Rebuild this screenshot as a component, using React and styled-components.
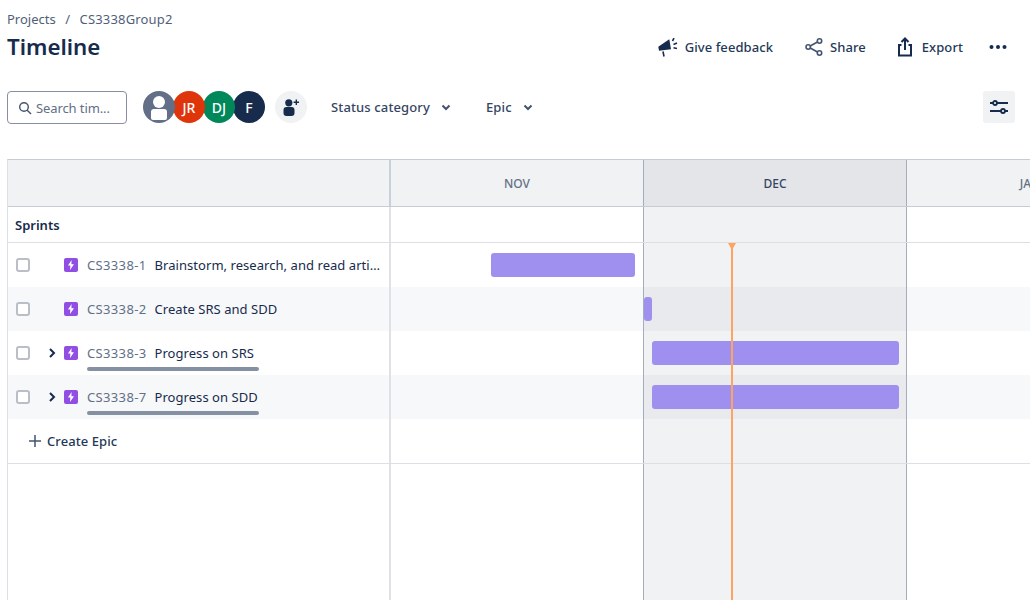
import React from "react";
import styled, { createGlobalStyle } from "styled-components";

const Global = createGlobalStyle`
  html, body { margin: 0; padding: 0; background: #fff; }
  body { font-family: "Noto Sans", "Open Sans", sans-serif; color: #172b4d; overflow: hidden; }
  * { box-sizing: border-box; }
`;

const Page = styled.div`
  width: 1030px; height: 600px; overflow: hidden; display: flex; flex-direction: column;
`;
const Header = styled.header`
  display: flex; justify-content: space-between; padding: 10px 23px 0 7px; height: 91px;
`;
const Crumbs = styled.nav`
  display: flex; gap: 9.5px; font-size: 13px; line-height: 18px; color: #505f79;
`;
const Project = styled.span`
  letter-spacing: 0.17px;
`;
const Title = styled.h1`
  margin: 4px 0 0; font-size: 22.3px; line-height: 30px; font-weight: 600; color: #172b4d;
`;
const Actions = styled.div`
  display: flex; align-items: center; height: 32px; margin-top: 21px;
`;
const ActionButton = styled.div`
  display: flex; align-items: center; gap: ${p => p.$gap}px; font-size: 13px; font-weight: 500; color: #253858; margin-left: ${p => p.$ml || 0}px;
  white-space: nowrap; letter-spacing: 0.07px;
`;
const MoreDots = styled.svg`
  margin-left: 26px;
`;
const Toolbar = styled.div`
  display: flex; align-items: flex-start; height: 33px; padding: 0 15px 0 7px;
`;
const Search = styled.div`
  width: 120px; height: 33px; border: 1px solid #8590a2; border-radius: 4px; display: flex; align-items: center; gap: 4px; padding-left: 10px;
  font-size: 13px; color: #626f86; white-space: nowrap; letter-spacing: -0.1px;
`;
const Avatars = styled.div`
  display: flex; margin-left: 16px; align-items: center;
`;
const Avatar = styled.div`
  position: relative; z-index: ${p => p.$z};
  width: 32px; height: 32px; border-radius: 50%; background: ${p => p.$bg}; color: #fff; font-size: 14px; font-weight: 500;
  display: flex; align-items: center; justify-content: center; margin-left: ${p => p.$first ? 0 : -2}px; overflow: hidden;
`;
const AddPeople = styled.div`
  width: 32px; height: 32px; border-radius: 50%; background: #f1f2f4; margin-left: 10px; display: flex; align-items: center; justify-content: center;
`;
const Filter = styled.div`
  display: flex; align-items: center; height: 32px; gap: 10px; font-size: 13px; font-weight: 500; color: #344563; margin-left: ${p => p.$ml}px; letter-spacing: 0.13px;
`;
const SettingsButton = styled.div`
  width: 32px; height: 32px; margin-left: auto; background: #f1f2f4; border-radius: 3px; display: flex; align-items: center; justify-content: center;
`;
const Timeline = styled.section`
  position: relative; margin: 35px 0 0 7px; flex: 1; display: flex; flex-direction: column;
  border-left: 1px solid #dcdfe4; border-top: 1px solid #c7cbd4; min-height: 0; overflow: hidden;
`;
const Row = styled.div`
  display: grid; grid-template-columns: 381px 2px 252px 1px 262px 1px 246px; flex: ${p => p.$fill ? 1 : "none"};
  height: ${p => p.$h ? p.$h + "px" : "auto"};
  background: ${p => p.$bg || "#fff"};
  border-bottom: ${p => p.$line ? `1px solid ${p.$line}` : "none"};
`;
const Left = styled.div`
  display: flex; align-items: center; min-width: 0; font-size: 13px; padding-left: ${p => p.$pl || 0}px;
  font-weight: ${p => p.$bold ? 600 : 400}; color: #172b4d;
`;
const VLine = styled.div`
  background: ${p => p.$c || "#a5adba"};
`;
const Month = styled.div`
  position: relative; display: flex; align-items: center; justify-content: center;
  font-size: 12px; font-weight: 500; color: ${p => p.$c || "#626f86"}; background: ${p => p.$bg || "transparent"}; white-space: nowrap;
`;
const Check = styled.span`
  width: 14px; height: 14px; border: 2px solid #b9bec7; border-radius: 3px; flex: none; background: #fff; margin-left: 8px;
`;
const Expand = styled.span`
  width: 16px; margin-left: 14px; flex: none; display: flex; justify-content: center;
`;
const EpicIcon = styled.span`
  width: 14px; height: 14px; border-radius: 2px; background: #904ee2; flex: none; margin-left: 4px; margin-right: 9px; display: flex; align-items: center; justify-content: center;
`;
const IssueWrap = styled.span`
  position: relative; display: flex; gap: 8px; white-space: nowrap; min-width: 0;
`;
const IssueId = styled.span`
  color: #626f86; letter-spacing: 0.35px;
`;
const Summary = styled.span`
  color: #172b4d; overflow: hidden; text-overflow: ellipsis; max-width: 226px; letter-spacing: 0.05px;
`;
const Progress = styled.span`
  position: absolute; left: 0; width: 172px; top: 23px; height: 4px; border-radius: 2px; background: #8590a2;
`;
const Bar = styled.div`
  position: absolute; top: 10px; height: 24px; left: ${p => p.$l}px; width: ${p => p.$w}px; background: #9f8fef; border-radius: 3px;
`;
const CreateEpic = styled.div`
  display: flex; align-items: center; gap: 5px; font-weight: 500; margin-left: 20px; color: #253858; letter-spacing: 0.07px;
`;
const Today = styled.div`
  position: absolute; left: 723px; top: 83px; bottom: 0; width: 2px; background: #fea362;
  &::before { content: ""; position: absolute; left: -3px; top: 0; border: 4px solid transparent; border-top: 7px solid #fea362; border-bottom: 0; }
`;

const Bolt = () => (
  <svg width="8" height="10" viewBox="0 0 8 10"><path d="M4.6 0 1 5.6h2.400L3 10l4-5.800H4.400z" fill="#fff" /></svg>
);
const Chevron = () => (
  <svg width="8" height="12" viewBox="0 0 8 12"><path d="M2 2l4 4-4 4" fill="none" stroke="#172b4d" strokeWidth="2" /></svg>
);
const Caret = () => (
  <svg width="12" height="12" viewBox="0 0 12 12"><path d="M2.500 4.500 6 8l3.500-3.500" fill="none" stroke="#44546f" strokeWidth="2" /></svg>
);

const issues = [
  { id: "CS3338-1", s: "Brainstorm, research, and read articles", bar: <Bar $l={100} $w={144} /> },
  { id: "CS3338-2", s: "Create SRS and SDD", stripe: true, decBar: <Bar $l={0} $w={8} /> },
  { id: "CS3338-3", s: "Progress on SRS", kids: true, decBar: <Bar $l={8} $w={247} /> },
  { id: "CS3338-7", s: "Progress on SDD", kids: true, stripe: true, decBar: <Bar $l={8} $w={247} /> },
];

function Cells({ nov, dec, jan, decBg = "#f1f2f4", decColor, divider = "#dfe1e6" }) {
  return (
    <>
      <VLine $c={divider} />
      <Month>{nov}</Month>
      <VLine />
      <Month $bg={decBg} $c={decColor}>{dec}</Month>
      <VLine />
      <Month>{jan}</Month>
    </>
  );
}

export default function App() {
  return (
    <Page>
      <Global />
      <Header>
        <div>
          <Crumbs><span>Projects</span><span>/</span><Project>CS3338Group2</Project></Crumbs>
          <Title>Timeline</Title>
        </div>
        <Actions>
          <ActionButton $gap={5}>
            <svg width="22" height="20" viewBox="0 0 22 20" fill="#172b4d">
              <path d="M.3 9.700 11.300 2.300 13 12.300 1 13.700z" />
              <path d="M5 14.500l1 5" stroke="#172b4d" strokeWidth="1.600" />
              <path d="M14.500 4l1.500-2.800M15.500 7.500l3.500-1.500M15.500 10.800l3.500.7" stroke="#172b4d" strokeWidth="1.600" />
            </svg>
            Give feedback
          </ActionButton>
          <ActionButton $ml={32} $gap={7}>
            <svg width="18" height="18" viewBox="0 0 18 18" fill="none" stroke="#44546f" strokeWidth="1.600">
              <circle cx="3.200" cy="9" r="2.200" /><circle cx="14.500" cy="3" r="2.200" /><circle cx="14.500" cy="15" r="2.200" />
              <path d="M5.200 8 12.500 4M5.200 10l7.300 4" />
            </svg>
            Share
          </ActionButton>
          <ActionButton $ml={31} $gap={9}>
            <svg width="16" height="20" viewBox="0 0 16 20" fill="none" stroke="#172b4d" strokeWidth="2">
              <path d="M4.500 8H2v10.500h12V8h-2.500" />
              <path d="M8 13V2M4.500 5 8 1.500 11.500 5" />
            </svg>
            Export
          </ActionButton>
          <MoreDots width="18" height="6" viewBox="0 0 18 6" fill="#172b4d">
            <circle cx="2.500" cy="3" r="2" /><circle cx="9" cy="3" r="2" /><circle cx="15.500" cy="3" r="2" />
          </MoreDots>
        </Actions>
      </Header>
      <Toolbar>
        <Search>
          <svg width="14" height="14" viewBox="0 0 14 14" fill="none" stroke="#44546f" strokeWidth="1.400">
            <circle cx="6" cy="6" r="4.300" /><path d="M9.200 9.200 13 13" />
          </svg>
          Search tim...
        </Search>
        <Avatars>
          <Avatar $first $z={4} $bg="#626f86">
            <svg width="32" height="32" viewBox="0 0 32 32" fill="#fff">
              <circle cx="16" cy="11" r="6" />
              <path d="M8 21a3 3 0 0 1 3-3h10a3 3 0 0 1 3 3v6a2 2 0 0 1-2 2H10a2 2 0 0 1-2-2z" />
            </svg>
          </Avatar>
          <Avatar $z={3} $bg="#de350b">JR</Avatar>
          <Avatar $z={2} $bg="#00875a">DJ</Avatar>
          <Avatar $z={1} $bg="#172b4d">F</Avatar>
        </Avatars>
        <AddPeople>
          <svg width="18" height="18" viewBox="0 0 18 18" fill="#172b4d">
            <circle cx="6.800" cy="4.800" r="3.600" />
            <path d="M1.500 12a3 3 0 0 1 3-3h5a3 3 0 0 1 3 3v3a3 3 0 0 1-3 3h-5a3 3 0 0 1-3-3z" />
            <path d="M13.600 1.500h1.400v2h2v1.400h-2v2h-1.400v-2h-2V3.500h2z" />
          </svg>
        </AddPeople>
        <Filter $ml={24}>Status category <Caret /></Filter>
        <Filter $ml={34}>Epic <Caret /></Filter>
        <SettingsButton>
          <svg width="20" height="20" viewBox="0 0 20 20" fill="none" stroke="#172b4d" strokeWidth="1.800">
            <path d="M1 6h3M8 6h11M1 14h11M16 14h3" />
            <circle cx="6" cy="6" r="2" /><circle cx="14" cy="14" r="2" />
          </svg>
        </SettingsButton>
      </Toolbar>
      <Timeline>
        <Row $h={47} $bg="#f1f2f4" $line="#c7cbd4">
          <Left />
          <Cells nov="NOV" dec="DEC" jan="JAN" decBg="#e4e5e9" decColor="#344563" divider="#c8d0da" />
        </Row>
        <Row $h={36} $line="#dcdfe4">
          <Left $bold $pl={7}>Sprints</Left>
          <Cells />
        </Row>
        {issues.map(i => (
          <Row key={i.id} $h={44} $bg={i.stripe ? "#f7f8f9" : "#fff"}>
            <Left>
              <Check />
              <Expand>{i.kids && <Chevron />}</Expand>
              <EpicIcon><Bolt /></EpicIcon>
              <IssueWrap>
                <IssueId>{i.id}</IssueId>
                <Summary>{i.s}</Summary>
                {i.kids && <Progress />}
              </IssueWrap>
            </Left>
            <Cells nov={i.bar} dec={i.decBar} decBg={i.stripe ? "#e9eaed" : "#f1f2f4"} />
          </Row>
        ))}
        <Row $h={45} $line="#dcdfe4">
          <Left>
            <CreateEpic>
              <svg width="14" height="14" viewBox="0 0 14 14" stroke="#44546f" strokeWidth="1.500"><path d="M7 1v12M1 7h12" /></svg>
              Create Epic
            </CreateEpic>
          </Left>
          <Cells />
        </Row>
        <Row $fill>
          <Left />
          <Cells />
        </Row>
        <Today />
      </Timeline>
    </Page>
  );
}
